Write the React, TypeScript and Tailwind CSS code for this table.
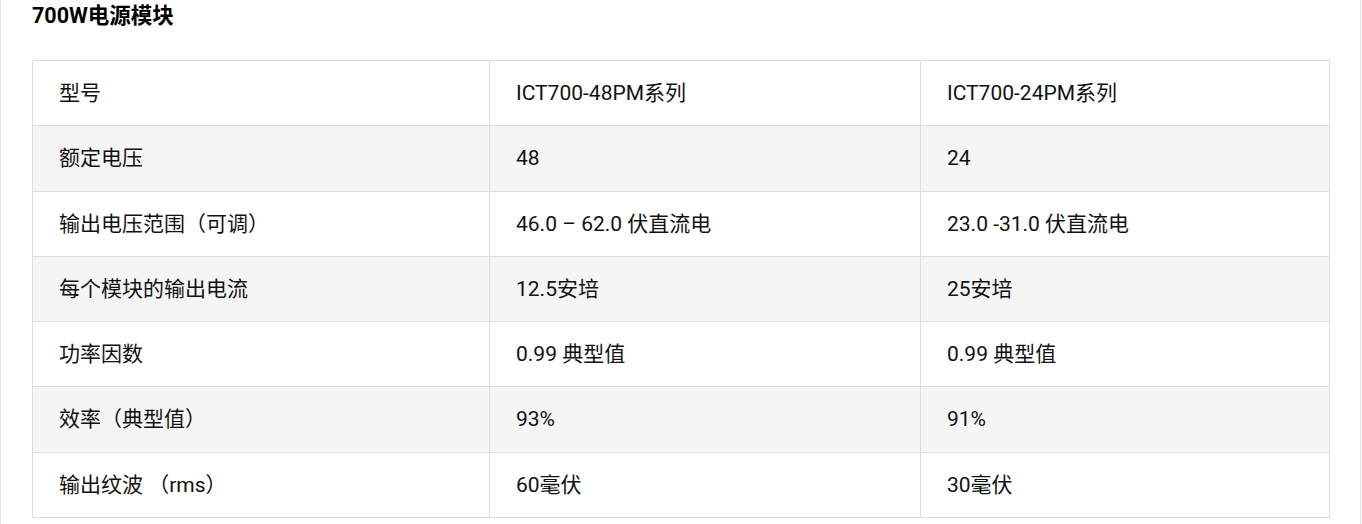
const rows: [string, string, string][] = [
  ["型号", "ICT700-48PM系列", "ICT700-24PM系列"],
  ["额定电压", "48", "24"],
  ["输出电压范围（可调）", "46.0 – 62.0 伏直流电", "23.0 -31.0 伏直流电"],
  ["每个模块的输出电流", "12.5安培", "25安培"],
  ["功率因数", "0.99 典型值", "0.99 典型值"],
  ["效率（典型值）", "93%", "91%"],
  ["输出纹波 （rms）", "60毫伏", "30毫伏"],
];

export default function App() {
  return (
    <div className="w-[1361px] min-h-[524px] border-x border-[#e6e6e6] bg-white px-[31px] font-['Roboto','Noto_Sans_CJK_SC',sans-serif] text-[#111]">
      <h2 className="h-[32px] leading-[32px] text-[21.5px] font-bold text-black">700W电源模块</h2>
      <table className="mt-[28px] w-[1297px] table-fixed border-collapse text-[21px]">
        <colgroup>
          <col className="w-[457px]" />
          <col className="w-[431px]" />
          <col className="w-[409px]" />
        </colgroup>
        <tbody>
          {rows.map((r, i) => (
            <tr key={i} className={i % 2 === 1 ? "bg-[#f5f5f5]" : "bg-white"}>
              {r.map((c, j) => (
                <td
                  key={j}
                  className="border border-[#dddddd] pl-[26px] py-[20px] leading-[24.3px] whitespace-nowrap"
                >
                  {c}
                </td>
              ))}
            </tr>
          ))}
        </tbody>
      </table>
    </div>
  );
}
